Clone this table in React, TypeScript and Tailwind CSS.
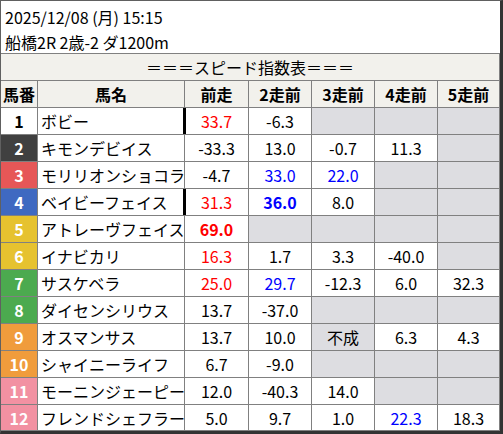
import React from 'react';

type Cell = { v: string; c?: 'r' | 'b'; bold?: boolean; gray?: boolean } | null;

interface Horse {
  no: number;
  name: string;
  bg: string;
  fg: string;
  mark?: boolean;
  cells: Cell[];
}

const horses: Horse[] = [
  { no: 1, name: 'ボビー', bg: 'bg-white', fg: 'text-black', mark: true, cells: [{ v: '33.7', c: 'r' }, { v: '-6.3' }, null, null, null] },
  { no: 2, name: 'キモンデビイス', bg: 'bg-[#404040]', fg: 'text-white', cells: [{ v: '-33.3' }, { v: '13.0' }, { v: '-0.7' }, { v: '11.3' }, null] },
  { no: 3, name: 'モリリオンショコラ', bg: 'bg-[#e65757]', fg: 'text-white', cells: [{ v: '-4.7' }, { v: '33.0', c: 'b' }, { v: '22.0', c: 'b' }, null, null] },
  { no: 4, name: 'ベイビーフェイス', bg: 'bg-[#3f69c1]', fg: 'text-white', mark: true, cells: [{ v: '31.3', c: 'r' }, { v: '36.0', c: 'b', bold: true }, { v: '8.0' }, null, null] },
  { no: 5, name: 'アトレーヴフェイス', bg: 'bg-[#e6c22f]', fg: 'text-white', cells: [{ v: '69.0', c: 'r', bold: true }, null, null, null, null] },
  { no: 6, name: 'イナビカリ', bg: 'bg-[#e6c22f]', fg: 'text-white', cells: [{ v: '16.3', c: 'r' }, { v: '1.7' }, { v: '3.3' }, { v: '-40.0' }, null] },
  { no: 7, name: 'サスケベラ', bg: 'bg-[#4caa4f]', fg: 'text-white', cells: [{ v: '25.0', c: 'r' }, { v: '29.7', c: 'b' }, { v: '-12.3' }, { v: '6.0' }, { v: '32.3' }] },
  { no: 8, name: 'ダイセンシリウス', bg: 'bg-[#4caa4f]', fg: 'text-white', cells: [{ v: '13.7' }, { v: '-37.0' }, null, null, null] },
  { no: 9, name: 'オスマンサス', bg: 'bg-[#f09c3c]', fg: 'text-white', cells: [{ v: '13.7' }, { v: '10.0' }, { v: '不成', gray: true }, { v: '6.3' }, { v: '4.3' }] },
  { no: 10, name: 'シャイニーライフ', bg: 'bg-[#f09c3c]', fg: 'text-white', cells: [{ v: '6.7' }, { v: '-9.0' }, null, null, null] },
  { no: 11, name: 'モーニンジェーピー', bg: 'bg-[#f291a2]', fg: 'text-white', cells: [{ v: '12.0' }, { v: '-40.3' }, { v: '14.0' }, null, null] },
  { no: 12, name: 'フレンドシェフラー', bg: 'bg-[#f291a2]', fg: 'text-white', cells: [{ v: '5.0' }, { v: '9.7' }, { v: '1.0' }, { v: '22.3', c: 'b' }, { v: '18.3' }] },
];

const colW = ['w-[64px]', 'w-[63px]', 'w-[63px]', 'w-[63px]', 'w-[62px]'];
const heads = ['前走', '2走前', '3走前', '4走前', '5走前'];

const App: React.FC = () => {
  return (
    <div
      className="w-[503px] h-[434px] bg-white border-l border-t border-[#606060] border-r-[3px] border-b-[3px] border-r-[#333] border-b-[#333] text-black text-[16px] leading-none"
      style={{ fontFamily: '"Noto Sans CJK JP", "Noto Sans", sans-serif' }}
    >
      {/* header info */}
      <div className="h-[53px] border-b border-[#808080] pl-[4px] pt-[6px] flex flex-col gap-[6px]">
        <div className="h-[19px] flex items-center">2025/12/08 (月) 15:15</div>
        <div className="h-[19px] flex items-center">船橋2R 2歳-2 ダ1200m</div>
      </div>

      {/* title */}
      <div className="h-[27px] bg-[#f2f1ec] border-b border-r border-[#808080] flex items-center justify-center">
        ＝＝＝スピード指数表＝＝＝
      </div>

      {/* column heads */}
      <div className="h-[27px] flex bg-[#f2f1ec] border-b border-[#808080] font-bold">
        <div className="w-[37px] border-r border-[#808080] flex items-center justify-center">馬番</div>
        <div className="w-[147px] border-r border-[#808080] flex items-center justify-center">馬名</div>
        {heads.map((h, i) => (
          <div key={h} className={`${colW[i]} border-r border-[#808080] flex items-center justify-center`}>{h}</div>
        ))}
      </div>

      {horses.map(h => (
        <div key={h.no} className="h-[27px] flex border-b border-[#808080] last:h-[26px]">
          <div className={`w-[37px] border-r border-[#808080] flex items-center justify-center font-bold ${h.bg} ${h.fg}`}>{h.no}</div>
          <div className="w-[147px] border-r border-[#808080] flex items-center pl-[3px] whitespace-nowrap">{h.name}</div>
          {h.cells.map((c, i) => {
            const gray = !c || c.gray;
            const color = c?.c === 'r' ? 'text-[#ff0000]' : c?.c === 'b' ? 'text-[#0000ff]' : 'text-black';
            return (
              <div
                key={i}
                className={`${colW[i]} relative border-r border-[#808080] flex items-center justify-center ${gray ? 'bg-[#dddde1]' : 'bg-white'} ${color} ${c?.bold ? 'font-bold' : ''}`}
              >
                {i === 0 && h.mark && <span className="absolute left-[-2px] top-0 bottom-0 w-[3px] bg-black" />}
                {c?.v}
              </div>
            );
          })}
        </div>
      ))}
    </div>
  );
};

export default App;
